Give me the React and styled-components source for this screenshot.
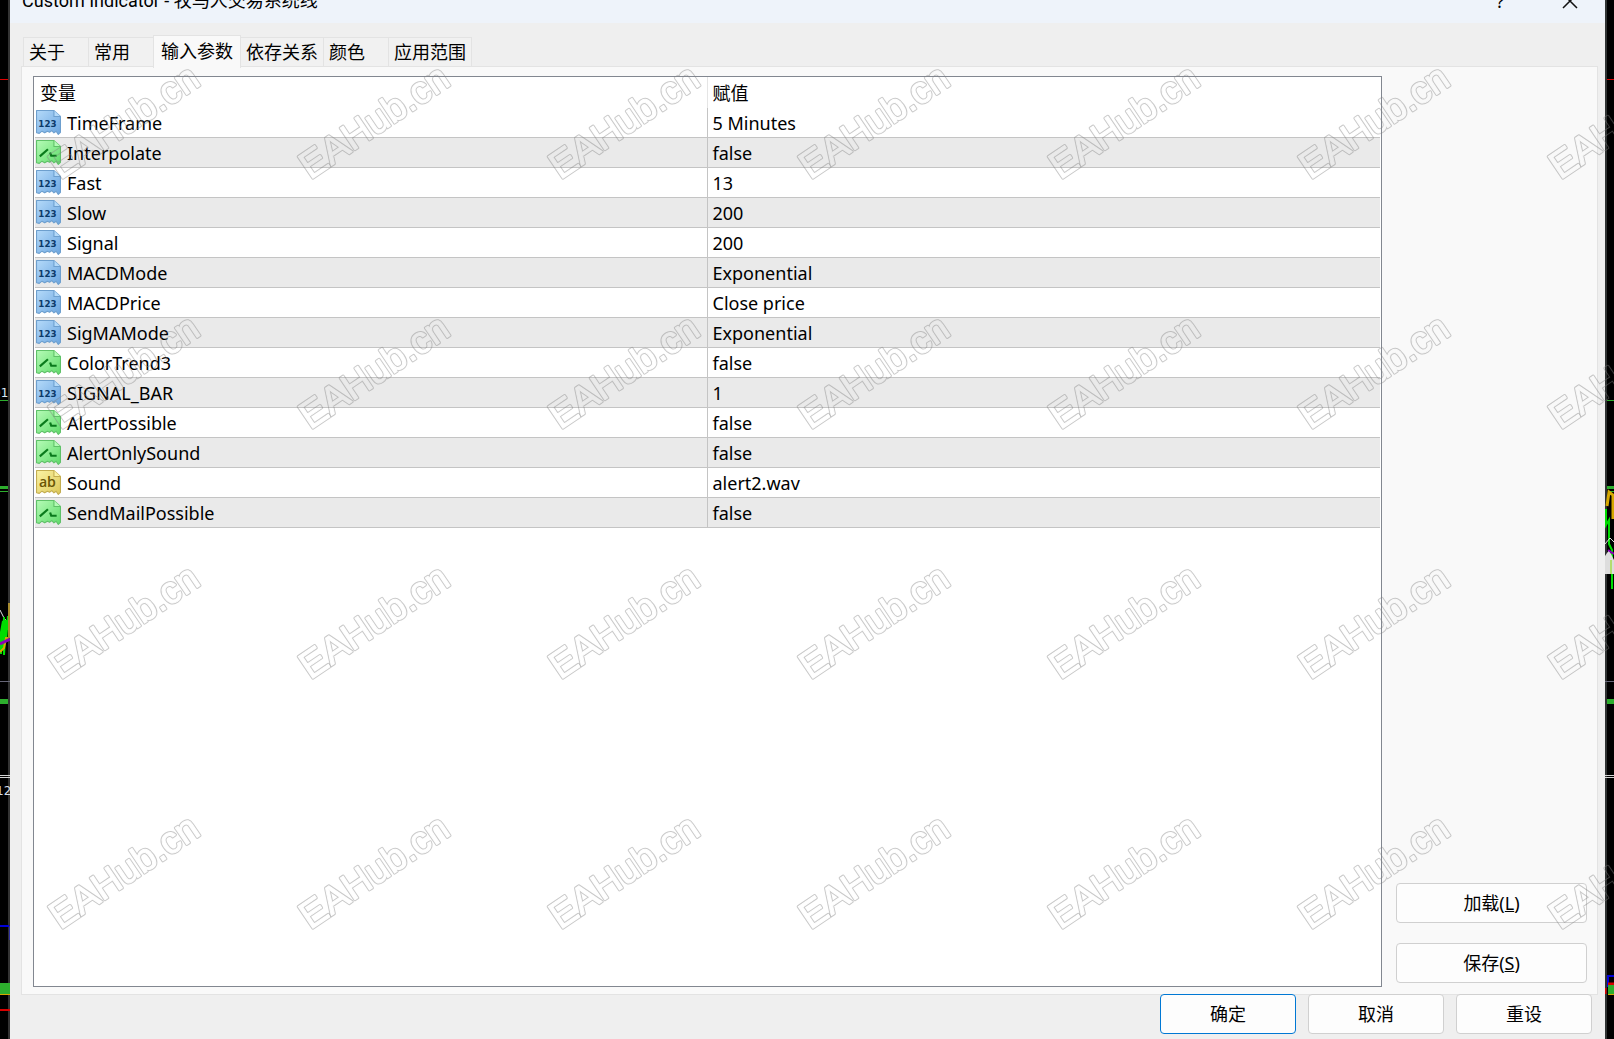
import React from "react";
import styled, { createGlobalStyle, css } from "styled-components";

const GlobalStyle = createGlobalStyle`
  *, *::before, *::after { box-sizing: border-box; }
  body {
    margin: 0;
    background: #000;
    color: #000;
    font: 18px/24px "Noto Sans", "Noto Sans CJK SC", sans-serif;
  }
  button { font: inherit; color: inherit; }
`;

const Screen = styled.div`
  position: relative;
  display: flex;
  height: 100vh;
  overflow: hidden;
`;

const ChartStrip = styled.svg`
  flex: none;
  display: block;
  width: ${(p) => p.$width}px;
  height: 100%;
  background: #000;
`;

const Dialog = styled.section`
  flex: 1;
  min-width: 0;
  display: flex;
  flex-direction: column;
  background: #efefef;
`;

const TitleBar = styled.header`
  flex: none;
  display: flex;
  align-items: flex-end;
  justify-content: space-between;
  height: 23px;
  padding: 0 26px 10px 12px;
  overflow: hidden;
  background: #eef3fa;
`;

const Title = styled.h1`
  margin: 0;
  font-family: Roboto, "Noto Sans CJK SC", sans-serif;
  font-size: 18px;
  font-weight: 400;
`;

const WindowButtons = styled.div`
  display: flex;
  align-items: flex-end;
  gap: 57px;
`;

const WindowButton = styled.button`
  display: flex;
  padding: 0;
  border: 0;
  background: none;
  line-height: 24px;
`;

const TabList = styled.div`
  display: flex;
  align-items: flex-end;
  height: 44px;
  padding: 12px 13px 0;
`;

const Tab = styled.button`
  min-width: 66px;
  height: 30px;
  margin-right: -1px;
  padding: 0 5px 2px;
  border: 1px solid #e3e3e3;
  border-bottom: 0;
  background: #f1f1f1;
  text-align: left;
  white-space: nowrap;
  ${(p) =>
    p.$active &&
    css`
      z-index: 1;
      height: 33px;
      margin-bottom: -1px;
      padding: 0 7px 3px;
      background: #f9f9f9;
    `}
`;

const Panel = styled.div`
  flex: 1;
  min-height: 0;
  display: flex;
  gap: 14px;
  margin: -1px 7px 0 11px;
  padding: 9px 10px 7px 11px;
  border: 1px solid #e3e3e3;
  background: #f9f9f9;
`;

const ListBox = styled.div`
  flex: 1;
  min-width: 0;
  padding: 0 1px;
  border: 1px solid #828790;
  background: #fff;
`;

const Table = styled.table`
  width: 100%;
  border-collapse: separate;
  border-spacing: 0;
  table-layout: fixed;
`;

const HeadCell = styled.th`
  height: 31px;
  padding: 0 5px;
  border-right: ${(p) => (p.$divider ? "1px solid #e5e5e5" : "0")};
  font-weight: 400;
  text-align: left;
`;

const Row = styled.tr`
  background: #fff;
  &:nth-child(even) { background: #eaeaea; }
`;

const Cell = styled.td`
  height: 30px;
  padding: 0 5px;
  border-bottom: 1px solid #c4c4c4;
`;

const NameCell = styled(Cell)`
  padding: 0 1px;
  border-right: 1px solid #c4c4c4;
`;

const Name = styled.div`
  display: flex;
  align-items: center;
  gap: 6px;
`;

const Side = styled.div`
  flex: none;
  display: flex;
  flex-direction: column;
  justify-content: flex-end;
  gap: 20px;
  width: 191px;
  padding-bottom: 4px;
`;

const PushButton = styled.button`
  height: 40px;
  padding: 0 12px;
  border: 1px solid ${(p) => (p.$primary ? "#0078d4" : "#d0d0d0")};
  border-radius: 4px;
  background: #fdfdfd;
`;

const Footer = styled.footer`
  flex: none;
  display: flex;
  justify-content: flex-end;
  gap: 12px;
  margin-top: -1px;
  padding: 0 13px 5px;
  ${PushButton} { width: 136px; }
`;

const WatermarkLayer = styled.div`
  position: absolute;
  inset: 0;
  display: grid;
  grid-template-columns: repeat(auto-fill, 250px);
  grid-auto-rows: 250px;
  width: calc(100% + 250px);
  pointer-events: none;
`;

const fileShape =
  "M1.5 1.5H17.5L23.5 7V21.5L21.5 23.5L19.5 20.5L17.5 22L15.5 20L13.5 21.5L11.5 20.5L9 22L6.5 20.5L4 22.5L1.5 22Z";

const iconStyles = {
  number: { from: "#b4dafa", to: "#6ba5df", line: "#6d9fce", ink: "#0b3a68", text: "123" },
  bool: { from: "#b5fbb6", to: "#5fdb6a", line: "#5fc168", ink: "#0a7a1c" },
  string: { from: "#fbf3a4", to: "#dcc758", line: "#c3ad50", ink: "#6a5505", text: "ab" },
};

function TypeIcon({ kind }) {
  const s = iconStyles[kind];
  return (
    <svg width="25" height="25" viewBox="1 1 23 23" aria-hidden="true">
      <path d={fileShape} fill={`url(#fill-${kind})`} stroke={s.line} strokeLinejoin="round" />
      <path d="M17.5 1.5V7H23.5" fill={s.from} stroke={s.line} strokeLinejoin="round" />
      {kind === "bool" ? (
        <path d="M4.5 16L12 9.5M14 12.5L15 15.5H20" fill="none" stroke={s.ink} strokeWidth="2" />
      ) : (
        <text
          x="11.5"
          y="17"
          textAnchor="middle"
          fontFamily={kind === "number" ? "DejaVu Sans, sans-serif" : "Open Sans, sans-serif"}
          fontWeight={kind === "number" ? 700 : 600}
          fontSize={kind === "number" ? 8 : 13}
          fill={s.ink}
        >
          {s.text}
        </text>
      )}
    </svg>
  );
}

const markFont = {
  y: 11,
  textAnchor: "middle",
  fontFamily: "Liberation Sans, sans-serif",
  fontSize: 38,
  strokeLinejoin: "round",
};

function Definitions() {
  return (
    <svg width="0" height="0" style={{ position: "absolute" }} aria-hidden="true">
      <defs>
        {Object.entries(iconStyles).map(([kind, s]) => (
          <linearGradient key={kind} id={`fill-${kind}`} x1="0" y1="0" x2="1" y2="1">
            <stop offset="0" stopColor={s.from} />
            <stop offset="1" stopColor={s.to} />
          </linearGradient>
        ))}
        <mask id="hollow" maskUnits="userSpaceOnUse" x="-125" y="-60" width="250" height="120">
          <rect x="-125" y="-60" width="250" height="120" fill="#fff" />
          <text {...markFont} fill="#000" stroke="#000" strokeWidth="1">EAHub.cn</text>
        </mask>
      </defs>
    </svg>
  );
}

function Watermark() {
  return (
    <svg width="250" height="250" viewBox="-125 -123 250 250" aria-hidden="true">
      <g transform="rotate(-34)">
        <text {...markFont} fill="none" stroke="#808080" strokeOpacity="0.42" strokeWidth="3" mask="url(#hollow)">
          EAHub.cn
        </text>
      </g>
    </svg>
  );
}

function LeftChart() {
  return (
    <ChartStrip $width={10} aria-hidden="true">
      <rect x="8" width="2" height="100%" fill="#333" />
      <path d="M0 79.5H8" stroke="#e00000" />
      <text x="-7" y="397" fontFamily="DejaVu Sans, sans-serif" fontSize="12" fill="#dce8f4">01</text>
      <path d="M0 400.5H8M0 491.5H8" stroke="#2dae2d" />
      <path d="M0 487.5H8" stroke="#2dae2d" strokeWidth="3" />
      <path d="M0 610L4 618L9 624" fill="none" stroke="#ddd" />
      <path d="M1 654V632L3 621V650L4 617V655L6 620V640L8 616V630" fill="none" stroke="#00dc00" strokeWidth="2" />
      <path d="M0 652L4 648L6 638H9" fill="none" stroke="#d6a800" strokeWidth="2" />
      <path d="M9 638V603" stroke="#a88c30" strokeWidth="2" />
      <path d="M0 644L10 639" stroke="#8a00b8" strokeWidth="3" />
      <path d="M0 681.5H10" stroke="#667" />
      <path d="M0 701.5H8" stroke="#2dae2d" strokeWidth="5" />
      <path d="M0 775.5H10M0 777.5H10" stroke="#d5d5d5" />
      <text x="-4" y="795" fontFamily="DejaVu Sans, sans-serif" fontSize="12" fill="#d5dde8">12</text>
      <path d="M0 926H9" stroke="#0000d8" strokeWidth="2" />
      <path d="M9.5 926V940" stroke="#3030a0" />
      <rect y="983" width="10" height="11" fill="#2dae2d" />
      <path d="M0 994.5H10" stroke="#d6a800" />
      <path d="M0 1010H10" stroke="#d80000" strokeWidth="2" />
    </ChartStrip>
  );
}

function RightChart() {
  return (
    <ChartStrip $width={9} aria-hidden="true">
      <rect width="2" height="100%" fill="#303333" />
      <path d="M2 79.5H9" stroke="#d80000" />
      <path d="M2 400.5H9M4 491.5H9" stroke="#2dae2d" />
      <path d="M2 487.5H9" stroke="#2dae2d" strokeWidth="3" />
      <path d="M2 506L4 492L8 495V519" fill="none" stroke="#d6a800" strokeWidth="3" />
      <path d="M1 509V525L4 520V544L7 550V589" fill="none" stroke="#00dc00" strokeWidth="2" />
      <path d="M0 544L5 538L9 542" fill="none" stroke="#ddd" />
      <path d="M0 574V556L4 550L9 560V574Z" fill="#ddd" />
      <path d="M3 550L9 554" stroke="#8a00b8" strokeWidth="2" />
      <path d="M6 560V574" stroke="#8add00" />
      <path d="M0 681.5H9" stroke="#667" />
      <path d="M2 701.5H9" stroke="#2dae2d" strokeWidth="5" />
      <path d="M0 775.5H9M0 777.5H9" stroke="#d5d5d5" />
      <path d="M3 987V976H9" fill="none" stroke="#0000d8" strokeWidth="2" />
      <path d="M3 984H9M0 988V994" stroke="#d80000" strokeWidth="3" />
      <rect x="3" y="985" width="6" height="9" fill="#2dae2d" />
      <path d="M3 994.5H9" stroke="#d6a800" />
    </ChartStrip>
  );
}

const tabs = ["关于", "常用", "输入参数", "依存关系", "颜色", "应用范围"];

const inputs = [
  ["number", "TimeFrame", "5 Minutes"],
  ["bool", "Interpolate", "false"],
  ["number", "Fast", "13"],
  ["number", "Slow", "200"],
  ["number", "Signal", "200"],
  ["number", "MACDMode", "Exponential"],
  ["number", "MACDPrice", "Close price"],
  ["number", "SigMAMode", "Exponential"],
  ["bool", "ColorTrend3", "false"],
  ["number", "SIGNAL_BAR", "1"],
  ["bool", "AlertPossible", "false"],
  ["bool", "AlertOnlySound", "false"],
  ["string", "Sound", "alert2.wav"],
  ["bool", "SendMailPossible", "false"],
];

export default function App() {
  const [active, setActive] = React.useState(2);
  return (
    <Screen>
      <GlobalStyle />
      <Definitions />
      <LeftChart />
      <Dialog>
        <TitleBar>
          <Title>Custom Indicator - 牧马人交易系统线</Title>
          <WindowButtons>
            <WindowButton aria-label="Help">?</WindowButton>
            <WindowButton aria-label="Close">
              <svg width="18" height="20" viewBox="0 0 18 20" fill="none" stroke="#111" strokeWidth="1.5">
                <path d="M2 1L16 15M16 1L2 15" />
              </svg>
            </WindowButton>
          </WindowButtons>
        </TitleBar>
        <TabList role="tablist">
          {tabs.map((label, i) => (
            <Tab key={label} role="tab" aria-selected={i === active} $active={i === active} onClick={() => setActive(i)}>
              {label}
            </Tab>
          ))}
        </TabList>
        <Panel role="tabpanel">
          <ListBox>
            <Table>
              <thead>
                <tr>
                  <HeadCell $divider>变量</HeadCell>
                  <HeadCell>赋值</HeadCell>
                </tr>
              </thead>
              <tbody>
                {inputs.map(([kind, name, value]) => (
                  <Row key={name}>
                    <NameCell>
                      <Name>
                        <TypeIcon kind={kind} />
                        {name}
                      </Name>
                    </NameCell>
                    <Cell>{value}</Cell>
                  </Row>
                ))}
              </tbody>
            </Table>
          </ListBox>
          <Side>
            <PushButton>加载(<u>L</u>)</PushButton>
            <PushButton>保存(<u>S</u>)</PushButton>
          </Side>
        </Panel>
        <Footer>
          <PushButton $primary>确定</PushButton>
          <PushButton>取消</PushButton>
          <PushButton>重设</PushButton>
        </Footer>
      </Dialog>
      <RightChart />
      <WatermarkLayer>
        {Array.from({ length: 35 }, (_, i) => (
          <Watermark key={i} />
        ))}
      </WatermarkLayer>
    </Screen>
  );
}
